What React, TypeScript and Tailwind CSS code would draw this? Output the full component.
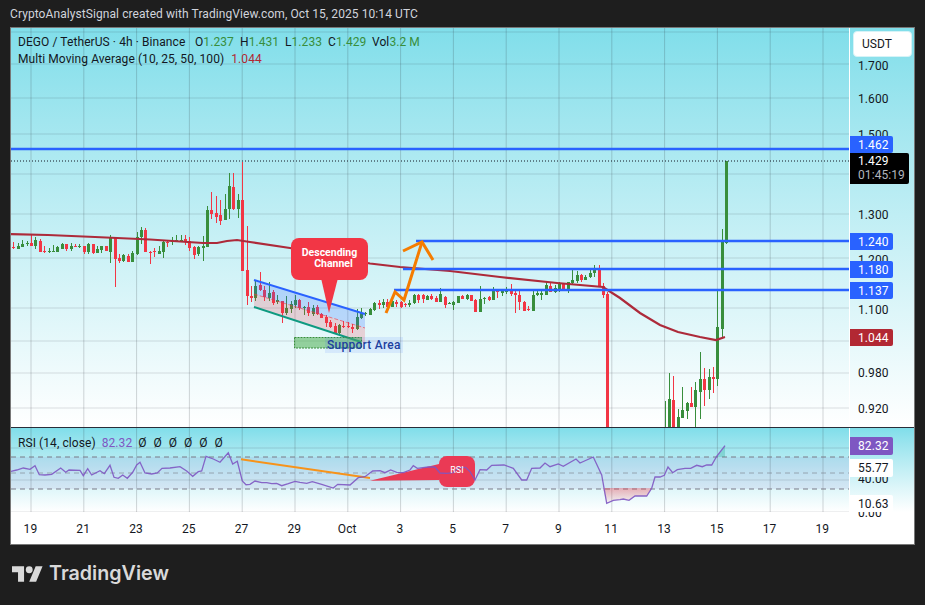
import React from "react"

type Candle = [number, number, number, number, number]

// candle rows: [up, wickTop, bodyTop, bodyBottom, wickBottom], measured at 3x
const seg1: Candle[] = [
  [0,125,140,145,147],[1,128,138,147,147],[1,120,132,141,141],[1,123,128,132,137],[0,105,129,138,138],
  [1,112,120,138,147],[0,117,123,156,156],[0,138,153,156,159],[1,144,153,156,159],[1,135,153,156,156],
  [1,138,141,156,156],[1,129,132,147,147],[0,132,132,147,153],[1,129,138,147,153],[0,132,138,141,141],
  [1,132,138,141,144],[0,138,138,156,162],[1,129,132,156,162],[0,132,132,159,162],[1,138,147,159,159],
  [1,138,138,150,159],[0,138,138,153,153],[1,105,114,156,189],[0,114,114,177,261],[0,162,174,183,189],
  [1,162,165,183,186],[0,162,168,186,186],[1,153,159,186,186],[1,96,111,162,165],[1,81,90,111,132],
  [0,84,90,156,156],[0,153,156,159,192],[0,144,153,156,171],[1,138,153,162,162],[1,120,126,156,174],
  [0,120,126,129,141],[1,111,123,126,135],[1,105,120,123,123],[1,105,120,123,126],[0,105,117,123,135],
  [0,111,123,144,153],[0,138,141,165,177],[1,138,141,162,168],[1,108,138,144,183],[1,18,30,141,141],
]
const seg2: Candle[] = [
  [0,126,180,192,207],[0,138,189,201,219],[0,150,195,213,225],[1,132,177,210,207],[1,69,108,177,207],
  [0,69,111,177,180],[1,132,150,177,204],[0,36,150,363,363],[0,228,360,438,465],[0,408,438,444,456],
  [1,390,408,444,453],[0,366,405,420,423],[0,408,420,441,453],[1,396,429,444,453],[0,420,426,459,465],
  [1,435,450,456,462],[0,453,453,489,519],[1,438,474,489,495],[1,453,462,477,489],[1,435,450,465,474],
  [0,447,450,474,480],[1,468,471,474,495],[0,456,471,489,498],[1,465,474,492,498],[0,465,471,492,495],
  [0,489,492,504,504],[0,495,501,519,531],[0,510,516,531,534],[0,519,528,552,552],[1,522,525,549,552],
  [0,513,528,531,534],[0,516,528,531,534],[0,522,531,537,549],[1,477,501,537,540],[1,474,489,504,507],
  [1,486,489,492,498],[1,474,477,495,495],[1,456,459,480,483],[0,450,459,465,477],[1,447,456,465,474],
  [0,447,456,471,483],[1,445,453,471,471],[0,450,456,462,471],[0,453,456,471,474],[0,459,462,465,471],
  [1,450,459,465,471],[1,432,435,459,462],[0,432,435,450,459],[0,432,435,447,459],[1,435,438,450,450],
  [0,432,438,447,450],[0,438,444,456,456],[1,414,432,456,456],
]
const seg3: Candle[] = [
  [0,198,200,224,235],[1,216,219,221,222],[1,214,216,224,240],[1,198,198,219,220],[0,196,197,206,208],
  [1,193,195,208,211],[0,194,196,212,213],[0,208,209,247,247],[1,168,207,245,246],[1,202,205,208,222],
  [0,198,202,210,213],[1,172,181,210,210],[0,181,183,186,204],[1,178,181,188,197],[1,172,181,186,192],
  [0,162,179,191,199],[0,180,190,194,249],[0,184,195,216,240],[0,214,216,243,243],[0,228,238,241,243],
  [1,178,195,243,243],[1,180,190,194,199],[1,178,190,194,210],[1,155,165,194,196],[0,155,168,186,186],
  [1,165,175,186,190],[1,155,163,183,186],[0,160,163,177,181],[1,155,156,178,188],[1,120,150,160,165],
  [1,122,135,153,158],[0,132,135,151,155],[1,135,140,150,150],[1,118,128,142,145],[1,105,114,130,140],
  [0,105,114,168,172],[0,160,168,194,204],[0,185,192,700,700],
]
const seg4: Candle[] = [
  [1,752,830,830,840],[1,670,747,840,840],[0,678,750,840,840],[1,778,801,840,840],[1,712,780,803,805],
  [1,756,760,782,806],[0,712,760,770,772],[1,695,720,770,840],[1,605,687,725,806],[0,655,687,720,768],
  [1,657,681,720,746],[0,650,681,687,728],[1,420,531,687,707],[1,237,275,537,560],[1,33,33,278,282],
]

const candles = [
  ...seg1.map((c, i) => ({ i, y0: 200, c })),
  ...seg2.map((c, i) => ({ i: i + 45, y0: 150, c })),
  ...seg3.map((c, i) => ({ i: i + 98, y0: 230, c })),
  ...seg4.map((c, i) => ({ i: i + 148, y0: 150, c })),
]

const ticks = [19, 21, 23, 25, 27, 29, "Oct", 3, 5, 7, 9, 11, 13, 15, 17, 19]
const gridX = ticks.map((_, i) => 31 + i * 52.8)
const gridY = [32, 64, 98, 134, 174, 214, 258, 308, 341, 373, 408]

const maLine =
  "10,234 48,235 95,237 150,239.5 203,243 217,243 227,241 237,240 250,242 290,248 370,263.5 400,267 450,271 500,277 557,283 603,287 620,298 640,313 660,325 678,332 700,337 716,340 725,337"

const pts = (list: number[][], x0: number) =>
  list.map(([x, y]) => `${(x0 + x / 3).toFixed(1)},${(425 + y / 3).toFixed(1)}`).join(" ")

const rsiLine = [
  pts([[30,140],[50,135],[70,129],[90,133],[105,122],[118,149],[135,150],[155,148],[182,129],[197,142],[207,135],[240,136],[250,152],[263,131],[275,150],[300,137],[313,146],[330,121],[342,157],[355,160],[368,150],[382,160],[398,142],[410,120],[420,112],[435,144],[455,147],[472,144],[486,130],[510,129],[540,125],[560,138],[578,154],[595,140],[605,138],[618,94],[640,102],[660,112],[685,83],[698,117],[712,109],[727,168],[738,179],[750,178],[765,168],[785,173],[800,173],[815,176],[830,175],[845,182],[865,176],[885,169]], 0),
  pts([[0,172],[20,175],[37,170],[65,178],[100,189],[113,178],[150,180],[175,158],[195,155],[218,138],[240,137],[255,143],[272,135],[290,142],[310,143],[330,135],[340,122],[352,130],[385,126],[405,126],[420,144],[440,145],[460,143],[475,128],[497,127],[510,140],[525,165],[540,134],[560,135],[575,121],[612,120],[640,130],[665,165],[680,165],[695,130],[720,129],[735,114],[750,125],[775,117],[790,124],[828,102],[840,114],[880,96],[905,150],[920,235],[940,226]], 300),
  pts([[0,224],[10,222],[27,226],[45,213],[80,213],[95,190],[105,156],[120,156],[133,151],[144,126],[158,143],[172,134],[195,130],[212,130],[230,121],[247,125],[260,120],[275,120],[290,94],[315,62]], 620),
].join(" ")

const oversold = "603,488 606.7,503.3 613.3,500.3 620,499.7 623.3,499 629,500.3 635,496 646.7,496 651.7,488.3"

const priceTicks: [string, number][] = [
  ["1.700", 65], ["1.600", 98], ["1.500", 134], ["1.300", 214], ["1.200", 259], ["1.100", 309], ["0.980", 372], ["0.920", 408],
]
const priceTags: [string, number, string][] = [
  ["1.462", 136, "bg-[#2962ff]"], ["1.240", 233, "bg-[#2962ff]"], ["1.180", 261, "bg-[#2962ff]"], ["1.137", 282, "bg-[#2962ff]"], ["1.044", 329, "bg-[#b22833]"],
]

function PriceAxis() {
  return (
    <div className="relative w-[65px] shrink-0 border-l border-white text-[12px] leading-[17px] tracking-[0.08px] text-[#131722]">
      {priceTicks.map(([t, y]) => (
        <span key={t} className="absolute left-[8px]" style={{ top: y - 35.5 }}>{t}</span>
      ))}
      <div className="absolute left-[3px] top-[3px] flex h-[26px] w-[59px] items-center rounded-[4px] border border-[#d6f3f7] bg-white pl-[8px]">USDT</div>
      {priceTags.map(([t, y, bg]) => (
        <span key={t} className={`absolute left-0 h-[17px] w-[43px] rounded-r-[2px] pl-[8px] leading-[18px] text-white ${bg}`} style={{ top: y - 28 }}>{t}</span>
      ))}
      <div className="absolute left-0 top-[125px] h-[31px] w-[59px] rounded-r-[2px] bg-black pl-[8px] pt-[2px] leading-[13.5px] text-white">
        <div>1.429</div>
        <div className="text-[#b2b5be]">01:45:19</div>
      </div>
    </div>
  )
}

function RsiAxis() {
  return (
    <div className="relative w-[65px] shrink-0 border-l border-white text-[12px] leading-[17px] tracking-[0.08px] text-[#131722]">
      <span className="absolute left-[8px] top-[43px]">40.00</span>
      <span className="absolute left-[8px] top-[77px]">0.00</span>
      <span className="absolute left-0 top-[9px] h-[18px] w-[43px] rounded-r-[2px] bg-[#7e57c2] pl-[8px] leading-[18px] text-white">82.32</span>
      <span className="absolute left-0 top-[31px] w-[43px] rounded-r-[2px] bg-white pl-[8px] leading-[18px]">55.77</span>
      <span className="absolute left-0 top-[67px] h-[17px] w-[43px] rounded-r-[2px] bg-white pl-[8px] leading-[18px]">10.63</span>
    </div>
  )
}

function PriceChart() {
  return (
    <svg className="block h-[399px] w-[838px]" viewBox="11 28 838 399">
      {gridX.map((x) => (
        <line key={x} x1={x} x2={x} y1={28} y2={427} stroke="#2a2e39" strokeOpacity={0.2} />
      ))}
      {gridY.map((y) => (
        <line key={y} x1={11} x2={849} y1={y} y2={y} stroke="#2a2e39" strokeOpacity={0.15} />
      ))}
      {candles.map(({ i, y0, c }) => {
        const x = Math.round(13.3 + i * 4.4)
        const color = c[0] ? "#388e3c" : "#f23645"
        return (
          <g key={i} fill={color} shapeRendering="crispEdges">
            <rect x={x} y={y0 + c[1] / 3} width={1} height={(c[4] - c[1]) / 3} />
            <rect x={x - 1} y={y0 + c[2] / 3} width={3} height={Math.max((c[3] - c[2]) / 3, 1)} />
          </g>
        )
      })}
      <polyline points={maLine} fill="none" stroke="#ad2a3a" strokeWidth={2.2} />
      <line x1={11} x2={849} y1={161} y2={161} stroke="#131722" strokeDasharray="1 2" />
      <line x1={11} x2={849} y1={149} y2={149} stroke="#2962ff" strokeWidth={2.4} />
      <line x1={416} x2={849} y1={241} y2={241} stroke="#2962ff" strokeWidth={2.4} />
      <line x1={403} x2={849} y1={269} y2={269} stroke="#2962ff" strokeWidth={2.4} />
      <line x1={394} x2={849} y1={290} y2={290} stroke="#2962ff" strokeWidth={2.4} />
      {/* channel */}
      <polygon points="254,280 365,314 365,328 254,294" fill="#2962ff" fillOpacity={0.22} />
      <polygon points="254,294 365,328 365,342 361,342 254,307" fill="#f23645" fillOpacity={0.2} />
      <line x1={254} y1={294} x2={365} y2={328} stroke="#f23645" strokeOpacity={0.6} strokeDasharray="4 2" />
      <line x1={254} y1={280} x2={365} y2={314} stroke="#2962ff" strokeWidth={2} />
      <line x1={254} y1={307} x2={361} y2={342} stroke="#0e9a81" strokeWidth={2} />
      {/* support area */}
      <rect x={294.5} y={337.5} width={67} height={10.5} fill="#4caf50" fillOpacity={0.55} stroke="#388e3c" strokeDasharray="2 1" />
      <rect x={325} y={337} width={78} height={16} fill="#2962ff" fillOpacity={0.1} />
      {/* orange arrow */}
      <polyline points="386,313 395,292 404,300 422,242" fill="none" stroke="#f57c00" strokeWidth={3} />
      <polyline points="403,251 422,242 433,260" fill="none" stroke="#f57c00" strokeWidth={3} />
      {/* callout */}
      <polygon points="321,278 338,278 329,313" fill="#f23645" />
      <rect x={291} y={238} width={77} height={42} rx={8} fill="#f23645" />
    </svg>
  )
}

function RsiChart() {
  return (
    <svg className="block h-[84px] w-[838px]" viewBox="11 428 838 84">
      <defs>
        <linearGradient id="oversold" x1="0" y1="0" x2="0" y2="1">
          <stop offset="0" stopColor="#f23645" stopOpacity={0.38} />
          <stop offset="1" stopColor="#f23645" stopOpacity={0.04} />
        </linearGradient>
      </defs>
      <rect x={11} y={457} width={838} height={32} fill="#7e57c2" fillOpacity={0.1} />
      {gridX.map((x) => (
        <line key={x} x1={x} x2={x} y1={428} y2={512} stroke="#2a2e39" strokeOpacity={0.2} />
      ))}
      {[448, 480, 512].map((y) => (
        <line key={y} x1={11} x2={849} y1={y} y2={y} stroke="#2a2e39" strokeOpacity={0.15} />
      ))}
      <line x1={11} x2={849} y1={457} y2={457} stroke="#787b86" strokeDasharray="5 4" />
      <line x1={11} x2={849} y1={473} y2={473} stroke="#787b86" strokeOpacity={0.6} strokeDasharray="5 4" />
      <line x1={11} x2={849} y1={489} y2={489} stroke="#787b86" strokeDasharray="5 4" />
      <polygon points={oversold} fill="url(#oversold)" />
      <polygon points="716.7,457 725,445.7 725,457" fill="#089981" fillOpacity={0.25} />
      <line x1={241} y1={459.3} x2={370} y2={478} stroke="#f7931a" strokeWidth={2} />
      <polygon points="370,480.7 439,464 439,480" fill="#ea3a55" />
      <rect x={439} y={456} width={36} height={31} rx={8} fill="#ea3a55" />
      <polyline points={rsiLine} fill="none" stroke="#7e57c2" strokeWidth={1.3} strokeOpacity={0.9} />
    </svg>
  )
}

function Logo() {
  return (
    <svg className="h-[16px] w-[31px] shrink-0" viewBox="0 0 36 18" fill="#d9d9d9">
      <path d="M14 18H7V7H0V0h14v18zM28 18h-8l7.5-18h8L28 18z" />
      <circle cx="20" cy="4" r="4" />
    </svg>
  )
}

export default function App() {
  return (
    <div className="flex h-[605px] w-[925px] flex-col overflow-hidden bg-[#1e1e1e] font-['Roboto',sans-serif]">
      <div className="flex h-[27px] items-center pl-[10px] text-[12px] tracking-[0.08px] text-[#d1d4dc]">
        CryptoAnalystSignal created with TradingView.com, Oct 15, 2025 10:14 UTC
      </div>
      <div className="ml-[10px] flex h-[518px] w-[905px] flex-col border border-[#787878] bg-white">
        <div className="relative flex h-[399px] bg-linear-to-b from-[#80deea] to-white">
          <PriceChart />
          <PriceAxis />
          <div className="absolute left-[7px] top-[6px] text-[12px] leading-[17px] tracking-[0.08px] text-[#131722]">
            <div className="flex">
              <span className="w-[177px]">DEGO / TetherUS · 4h · Binance</span>
              <span className="w-[45px]">O<span className="text-[#388e3c]">1.237</span></span>
              <span className="w-[45px]">H<span className="text-[#388e3c]">1.431</span></span>
              <span className="w-[43px]">L<span className="text-[#388e3c]">1.233</span></span>
              <span className="w-[44px]">C<span className="text-[#388e3c]">1.429</span></span>
              <span>Vol<span className="text-[#388e3c]">3.2<span className="ml-[3px]">M</span></span></span>
            </div>
            <div className="flex">
              <span>Multi Moving Average (10, 25, 50, 100)</span>
              <span className="ml-[7px] text-[#b22833]">1.044</span>
            </div>
          </div>
          <div className="absolute left-[280px] top-[220px] w-[77px] text-center text-[10.5px] font-bold leading-[10.5px] text-white">
            <div>Descending</div>
            <div className="pl-[8px]">Channel</div>
          </div>
          <div className="absolute left-[316px] top-[309px] text-[12px] font-medium leading-[16px] tracking-[0.25px] text-[#1d3f9e]">Support Area</div>
        </div>
        <div className="relative flex h-[85px] border-t border-[#2a2e39] bg-linear-to-b from-[#80deea] to-white">
          <RsiChart />
          <RsiAxis />
          <div className="absolute left-[7px] top-[7px] flex text-[12px] leading-[17px] tracking-[0.08px] text-[#131722]">
            <span>RSI (14, close)</span>
            <span className="ml-[6px] text-[#7e57c2]">82.32</span>
            <span className="ml-[6px] flex gap-[6.9px]">
              <span>Ø</span><span>Ø</span><span>Ø</span><span>Ø</span><span>Ø</span><span>Ø</span>
            </span>
          </div>
          <div className="absolute left-[428px] top-[36px] w-[36px] text-center text-[9px] leading-[12px] text-white">RSI</div>
        </div>
        <div className="flex flex-1 items-center overflow-hidden pt-[2px] text-[12px] tracking-[0.08px] text-[#131722]">
          <div className="ml-[-7px] flex">
            {ticks.map((t, i) => (
              <span key={i} className="w-[52.8px] shrink-0 text-center">{t}</span>
            ))}
          </div>
        </div>
      </div>
      <div className="flex flex-1 items-center gap-[6px] pb-[2px] pl-[12px]">
        <Logo />
        <span className="font-['Inter',sans-serif] text-[19.7px] font-semibold text-[#d9d9d9]">TradingView</span>
      </div>
    </div>
  )
}
